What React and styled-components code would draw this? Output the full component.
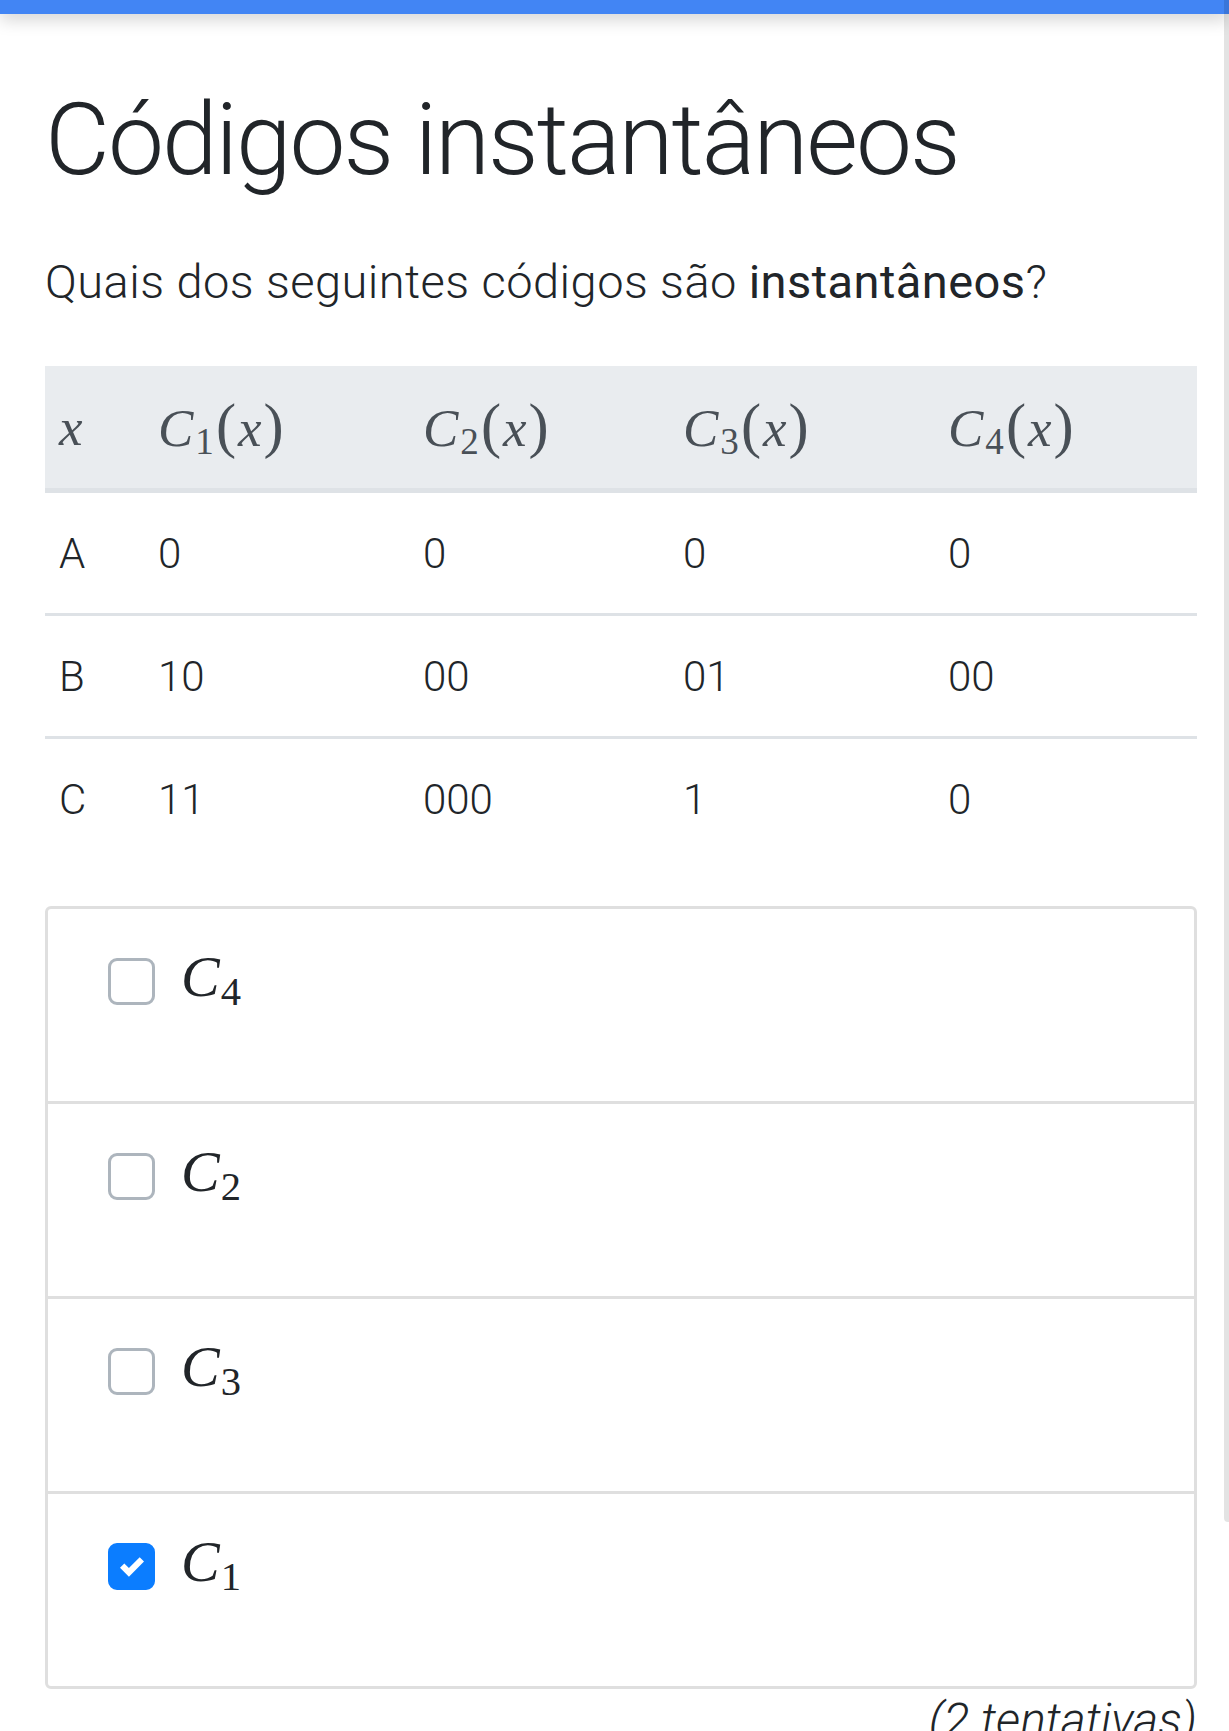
import React from 'react';
import styled, { createGlobalStyle } from 'styled-components';

const GlobalStyle = createGlobalStyle`
  html, body {
    margin: 0;
    padding: 0;
    background: #fff;
    overflow: hidden;
  }
  body {
    font-family: Roboto, "Noto Sans", sans-serif;
    font-weight: 300;
    color: #212529;
  }
`;

const rows = [
  { x: 'A', codes: ['0', '0', '0', '0'] },
  { x: 'B', codes: ['10', '00', '01', '00'] },
  { x: 'C', codes: ['11', '000', '1', '0'] },
];

const options = [
  { n: 4, checked: false },
  { n: 2, checked: false },
  { n: 3, checked: false },
  { n: 1, checked: true },
];

const App = () => {
  return (
    <Page>
      <GlobalStyle />
      <TopBar />
      <ScrollTrack />
      <Main>
        <Title>Códigos instantâneos</Title>
        <Question>
          Quais dos seguintes códigos são <strong>instantâneos</strong>?
        </Question>

        <CodeTable>
          <HeadRow>
            <Cell>
              <MathText>x</MathText>
            </Cell>
            {[1, 2, 3, 4].map((n) => (
              <Cell key={n}>
                <MathText>
                  C<Sub>{n}</Sub>
                  <Paren>(</Paren>x<Paren>)</Paren>
                </MathText>
              </Cell>
            ))}
          </HeadRow>
          {rows.map((r) => (
            <BodyRow key={r.x}>
              <Cell>{r.x}</Cell>
              {r.codes.map((c, i) => (
                <Cell key={i}>{c}</Cell>
              ))}
            </BodyRow>
          ))}
        </CodeTable>

        <OptionList>
          {options.map((o) => (
            <Option key={o.n}>
              <CheckBox checked={o.checked}>
                {o.checked && (
                  <svg width="24" height="24" viewBox="0 0 8 8">
                    <path
                      fill="#fff"
                      d="M6.564.75l-3.59 3.612-1.538-1.55L0 4.26 2.974 7.25 8 2.193z"
                    />
                  </svg>
                )}
              </CheckBox>
              <OptionLabel>
                C<Sub>{o.n}</Sub>
              </OptionLabel>
            </Option>
          ))}
        </OptionList>

        <Attempts>(2 tentativas)</Attempts>
      </Main>
    </Page>
  );
};

const Page = styled.div`
  position: relative;
  height: 1731px;
  overflow: hidden;
`;

const TopBar = styled.div`
  position: relative;
  z-index: 1;
  height: 14px;
  background: #4285f4;
  box-shadow: 0 4px 18px rgba(0, 0, 0, 0.22);
`;

const ScrollTrack = styled.div`
  position: absolute;
  z-index: 2;
  top: 0;
  right: 0;
  width: 5px;
  height: 1522px;
  background: rgba(0, 0, 0, 0.11);
  border-bottom-left-radius: 4px;
`;

const Main = styled.main`
  padding: 66px 32px 0 45px;
`;

const Title = styled.h1`
  margin: 0;
  font-size: 100px;
  font-weight: 300;
  line-height: 120px;
  letter-spacing: -2px;
`;

const Question = styled.p`
  margin: 47px 0 0;
  font-size: 47px;
  line-height: 70px;
  letter-spacing: 0.45px;

  strong {
    font-weight: 400;
  }
`;

const CodeTable = styled.div`
  margin-top: 49px;
  width: 1152px;
`;

const Row = styled.div`
  display: grid;
  grid-template-columns: 99px 265px 260px 265px 1fr;
  align-items: center;
  font-size: 42px;
`;

const HeadRow = styled(Row)`
  height: 122px;
  background: #e9ecef;
  color: #495057;
  border-bottom: 5px solid #dee2e6;
`;

const BodyRow = styled(Row)`
  height: 120px;

  & + & {
    border-top: 3px solid #dee2e6;
  }
`;

const Cell = styled.div`
  padding-left: 14px;
`;

const MathText = styled.span`
  font-family: "Liberation Serif", "Times New Roman", serif;
  font-style: italic;
  font-weight: 400;
  font-size: 53px;
  letter-spacing: 1px;
`;

const Sub = styled.span`
  font-style: normal;
  font-size: 0.7em;
  vertical-align: -0.22em;
  margin-left: 1px;
`;

const Paren = styled.span`
  font-style: normal;
  font-size: 1.14em;
  margin: 0 1px;
`;

const OptionList = styled.div`
  margin-top: 47px;
  border: 3px solid #dfdfdf;
  border-radius: 6px;
`;

const Option = styled.div`
  display: flex;
  align-items: flex-start;
  height: 143px;
  padding: 49px 0 0 60px;

  & + & {
    border-top: 3px solid #dfdfdf;
  }
`;

const CheckBox = styled.span`
  box-sizing: border-box;
  display: flex;
  align-items: center;
  justify-content: center;
  width: 47px;
  height: 47px;
  border: 3px solid ${(props) => (props.checked ? '#0b7dff' : '#adb5bd')};
  border-radius: 9px;
  background: ${(props) => (props.checked ? '#0b7dff' : '#fff')};
`;

const OptionLabel = styled.span`
  margin: -10px 0 0 26px;
  font-family: "Liberation Serif", "Times New Roman", serif;
  font-style: italic;
  font-weight: 400;
  font-size: 58px;
  line-height: 58px;
  color: #212529;
`;

const Attempts = styled.div`
  margin-top: 0;
  text-align: right;
  font-style: italic;
  font-size: 48px;
  line-height: 63px;
`;

export default App;
